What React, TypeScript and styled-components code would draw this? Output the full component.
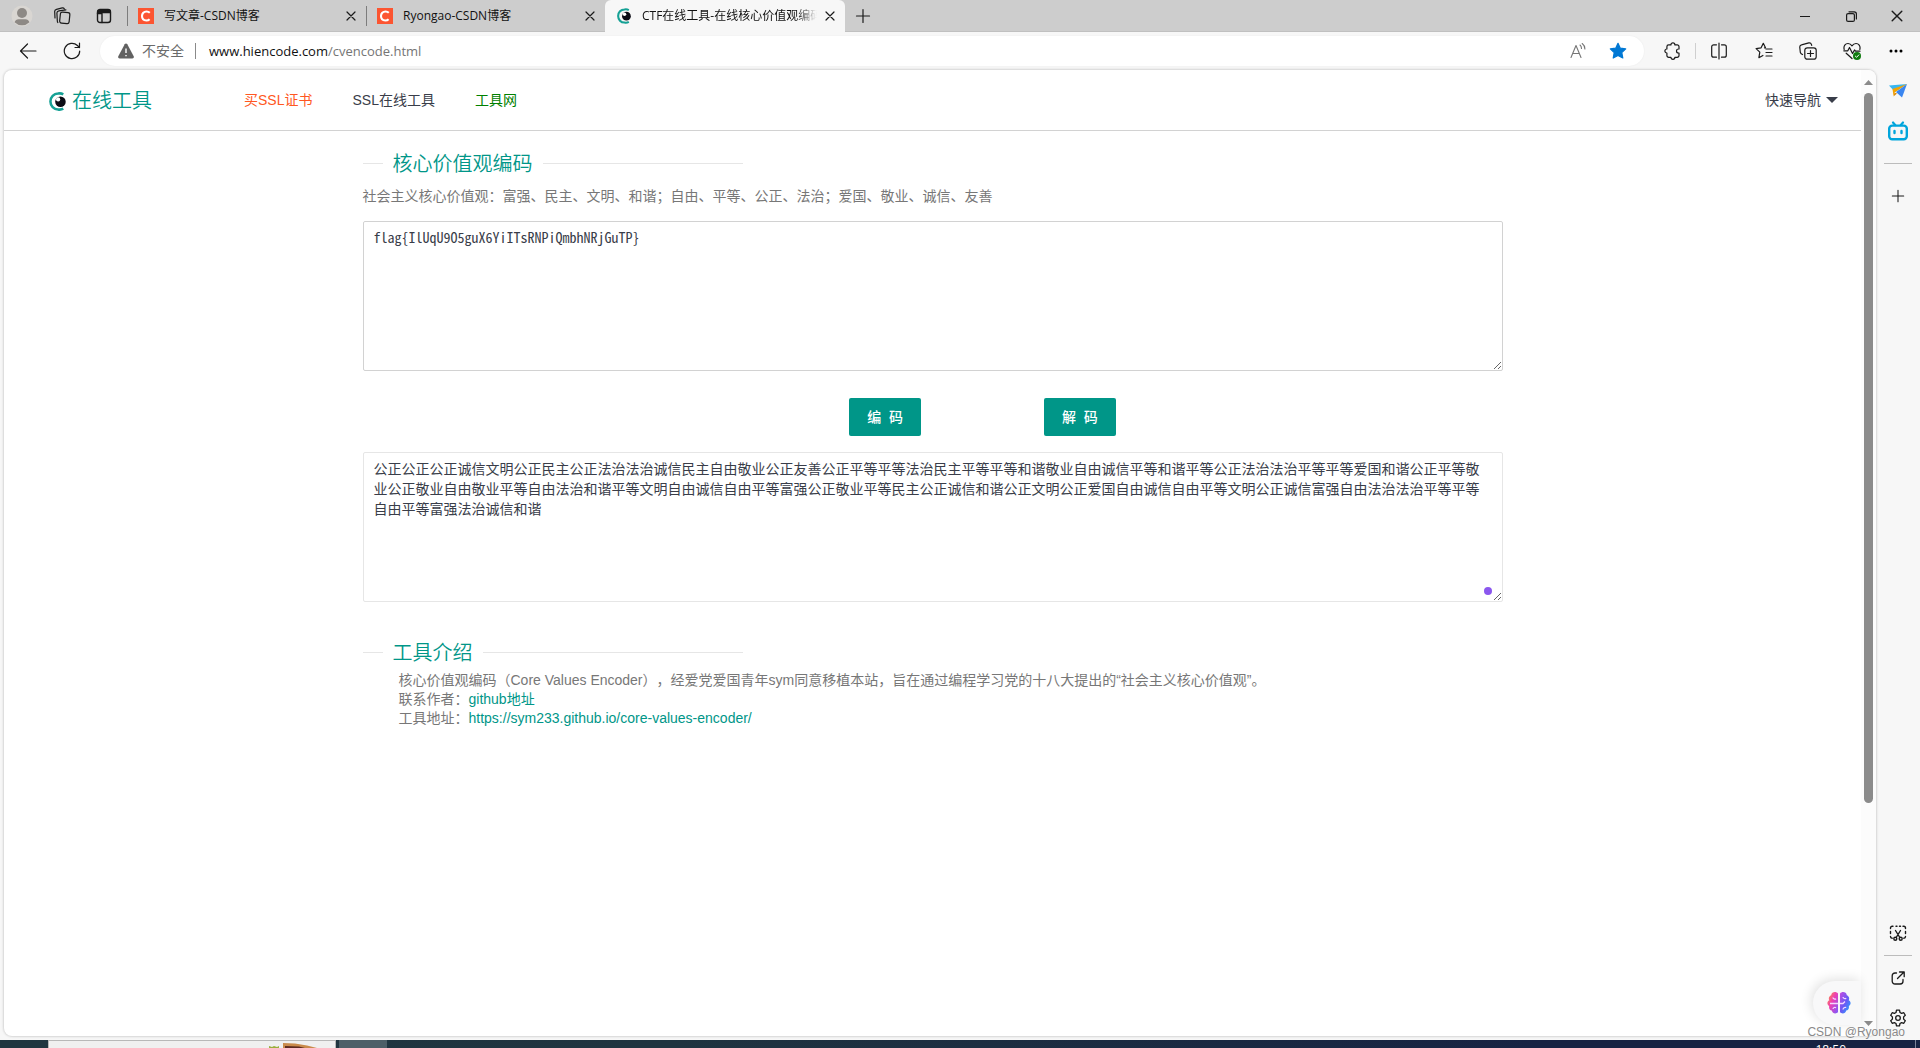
import React, { useState } from 'react';
import styled, { createGlobalStyle } from 'styled-components';

const UI_FONT = '"Open Sans", "Noto Sans CJK SC", sans-serif';
const PAGE_FONT = '"Liberation Sans", "Noto Sans CJK SC", sans-serif';
const MONO_FONT = '"Noto Sans Mono CJK SC", "Liberation Mono", "Noto Sans CJK SC", monospace';

const GlobalStyle = createGlobalStyle`
  *, *::before, *::after { box-sizing: border-box; }
  body { margin: 0; overflow: hidden; background: #f7f7f7; }
  button { border: 0; padding: 0; margin: 0; background: none; font: inherit; color: inherit; cursor: pointer; }
  a { text-decoration: none; }
  svg { display: block; flex: none; }
`;

const Window = styled.div`
  display: flex;
  flex-direction: column;
  height: 100vh;
  font-family: ${UI_FONT};
  font-size: 12px;
  color: #1b1b1b;
`;

/* ---------- tab strip ---------- */

const TabStrip = styled.div`
  display: flex;
  align-items: stretch;
  height: 32px;
  flex: none;
  background: #cdcdcd;
  box-shadow: inset 0 -1px 0 #c0c0c0;
`;

const StripTools = styled.div`
  display: flex;
  width: 127px;
  padding-left: 1px;
  flex: none;
`;

const IconButton = styled.button<{ $width: number }>`
  display: flex;
  align-items: center;
  justify-content: center;
  width: ${(p) => p.$width}px;
  flex: none;
`;

const Tab = styled.div<{ $active?: boolean }>`
  display: flex;
  align-items: center;
  flex: 0 1 ${(p) => (p.$active ? 240 : 239)}px;
  min-width: 0;
  padding: 0 7px 0 ${(p) => (p.$active ? 12 : 0)}px;
  background: ${(p) => (p.$active ? '#f7f7f7' : 'transparent')};
  border-radius: 6px 6px 0 0;

  &::before {
    content: '';
    display: ${(p) => (p.$active ? 'none' : 'block')};
    width: 1px;
    height: 20px;
    margin-right: 10px;
    background: #7d7d7d;
  }
`;

const TabTitle = styled.span<{ $fade?: boolean }>`
  flex: 1;
  margin: 0 5px 0 ${(p) => (p.$fade ? 11 : 10)}px;
  overflow: hidden;
  white-space: nowrap;
  line-height: 20px;
  color: #111;
  mask-image: ${(p) => (p.$fade ? 'linear-gradient(to right, #000 88%, transparent)' : 'none')};
`;

const WindowButtons = styled.div`
  display: flex;
  margin-left: auto;
`;

/* ---------- toolbar ---------- */

const Toolbar = styled.div`
  display: flex;
  align-items: center;
  height: 38px;
  padding: 0 2px 0 6px;
  flex: none;
  background: #f7f7f7;
`;

const AddressBar = styled.div`
  display: flex;
  align-items: center;
  flex: 1;
  height: 30px;
  margin: 0 7px 0 6px;
  padding: 0 6px 0 18px;
  border-radius: 15px;
  background: #fff;
  font-size: 14px;
  color: #6b6b6b;
  box-shadow: 0 0 2px rgba(0, 0, 0, 0.06);
`;

const SecurityLabel = styled.span`
  padding: 0 11px 0 8px;
  line-height: 20px;
`;

const Address = styled.span`
  flex: 1;
  margin-left: 13px;
  font-size: 13px;
  line-height: 20px;
  color: #757575;
`;

const Host = styled.span`
  color: #111;
`;

const Divider = styled.span<{ $dark?: boolean }>`
  width: 1px;
  height: 16px;
  background: ${(p) => (p.$dark ? '#8a8a8a' : '#cfcfcf')};
`;

/* ---------- page frame ---------- */

const Workspace = styled.div`
  display: flex;
  flex: 1;
  min-height: 0;
`;

const Frame = styled.div`
  position: relative;
  display: flex;
  flex: 1;
  min-width: 0;
  margin: 0 0 4px 4px;
  border-radius: 8px;
  overflow: hidden;
  background: #fff;
  box-shadow: 0 0 2px 1px #d6d6d6;
`;

const Page = styled.div`
  flex: 1;
  min-width: 0;
  font-family: ${PAGE_FONT};
  font-size: 14px;
`;

const Header = styled.header`
  display: flex;
  align-items: center;
  height: 61px;
  padding: 0 23px 0 45px;
  border-bottom: 1px solid #d2d2d2;
`;

const Brand = styled.a`
  display: flex;
  align-items: center;
  gap: 6px;
  width: 175px;
  padding-top: 2px;
  font-size: 20px;
  font-weight: 350;
  line-height: 28px;
  color: #009688;
`;

const Nav = styled.nav`
  display: flex;
  flex: 1;
`;

const NavLink = styled.a<{ $color: string }>`
  padding: 0 20px;
  line-height: 60px;
  color: ${(p) => p.$color};
`;

const QuickNav = styled.button`
  display: flex;
  align-items: center;
  gap: 5px;
  line-height: 60px;
  color: #393d49;
`;

const Main = styled.main`
  max-width: 1140px;
  margin: 0 auto;
  padding-top: 17px;
`;

const TitleRule = styled.fieldset`
  width: 33.4%;
  min-width: 0;
  margin: 0;
  padding: 0;
  border: 0;
  border-top: 1px solid #e6e6e6;
`;

const Title = styled.legend`
  margin-left: 20px;
  padding: 2px 10px 0;
  font-size: 20px;
  font-weight: 350;
  line-height: 28px;
  color: #009688;
`;

const Summary = styled.label`
  display: block;
  padding: 8px 0 15px;
  line-height: 20px;
  color: #777;
`;

const TextBoxWrap = styled.div`
  position: relative;
`;

const TextBox = styled.textarea<{ $border: string }>`
  display: block;
  width: 100%;
  height: 150px;
  padding: 5px 10px;
  border: 1px solid ${(p) => p.$border};
  border-radius: 2px;
  outline: none;
  resize: vertical;
  font-family: ${MONO_FONT};
  font-size: 14px;
  line-height: 20px;
  color: #393d49;
  background: #fff;
`;

const AssistDot = styled.span`
  position: absolute;
  right: 11px;
  bottom: 7px;
  width: 8px;
  height: 8px;
  border-radius: 50%;
  background: #8b57ee;
`;

const Actions = styled.div`
  display: flex;
  justify-content: center;
  gap: 123px;
  padding: 27px 0 16px 100px;
`;

const ActionButton = styled.button`
  height: 38px;
  padding: 0 18px 2px;
  border-radius: 2px;
  background: #009688;
  color: #fff;
  font-weight: 500;
  white-space: pre;
`;

const Intro = styled.section`
  margin-top: 35px;
`;

const IntroText = styled.div`
  padding: 4px 0 0 36px;
  line-height: 19px;
  color: #777;
  text-spacing-trim: space-all;
`;

const IntroLine = styled.p`
  margin: 0;
`;

const TextLink = styled.a`
  color: #009688;
`;

const ScrollTrack = styled.div`
  display: flex;
  flex-direction: column;
  align-items: center;
  width: 15px;
  flex: none;
  padding: 10px 0;
  background: #fcfcfc;
`;

const ScrollThumb = styled.div`
  width: 9px;
  height: 75%;
  margin: 8px 0 auto;
  border-radius: 5px;
  background: #8b8b8b;
`;

const BrainButton = styled.button`
  position: absolute;
  right: 15px;
  bottom: 11px;
  display: flex;
  align-items: center;
  width: 48px;
  height: 44px;
  padding-left: 14px;
  border-radius: 22px 0 0 22px;
  background: #f8f8f9;
  box-shadow: -2px -2px 12px rgba(0, 0, 0, 0.12);
`;

/* ---------- side rail ---------- */

const Rail = styled.aside`
  display: flex;
  flex-direction: column;
  align-items: center;
  width: 44px;
  flex: none;
  padding: 1px 0 2px;
`;

const RailButton = styled.button`
  display: flex;
  align-items: center;
  justify-content: center;
  width: 40px;
  height: 40px;
`;

const RailRule = styled.span<{ $gap: number }>`
  width: 28px;
  height: 1px;
  margin: ${(p) => p.$gap}px 0;
  background: #bcbcbc;
`;

const RailSpacer = styled.span`
  flex: 1;
`;

const Watermark = styled.span`
  position: absolute;
  right: 15px;
  bottom: 6px;
  font-family: ${PAGE_FONT};
  font-size: 12px;
  line-height: 20px;
  color: #8a8a8a;
  text-shadow: 0 0 1px #fff;
`;

/* ---------- desktop task bar ---------- */

const TaskBar = styled.footer`
  display: flex;
  height: 8px;
  flex: none;
  overflow: hidden;
  background: linear-gradient(to right, #203640, #1f3440 35%, #172343 80%);
`;

const SearchSlot = styled.div`
  display: flex;
  justify-content: flex-end;
  width: 288px;
  margin: 0 3px 0 48px;
  padding-right: 16px;
  border: 1px solid #b8b8b8;
  border-bottom: 0;
  background: #f0f0f0;
`;

const TaskSlot = styled.div`
  width: 48px;
  background: #4d5f68;
`;

const Clock = styled.time`
  margin: 3px 69px 0 auto;
  font-size: 12px;
  line-height: 14px;
  color: #fff;
`;

const TaskEdge = styled.span`
  width: 1px;
  margin-right: 4px;
  background: #7b8399;
`;

/* ---------- drawings ---------- */

type StrokeProps = { size?: number; box?: number; width?: number; color?: string; children: React.ReactNode };

const Stroke = ({ size = 20, box = 20, width = 1.2, color = '#1b1b1b', children }: StrokeProps) => (
  <svg
    width={size}
    height={size}
    viewBox={`0 0 ${box} ${box}`}
    fill="none"
    stroke={color}
    strokeWidth={width}
    strokeLinecap="round"
    strokeLinejoin="round"
    aria-hidden="true"
  >
    {children}
  </svg>
);

const CloseIcon = ({ size = 10 }: { size?: number }) => (
  <Stroke size={size} box={10}>
    <path d="M1 1l8 8M9 1L1 9" />
  </Stroke>
);

const PlusIcon = ({ size = 16 }: { size?: number }) => (
  <Stroke size={size} box={16}>
    <path d="M8 1.5v13M1.5 8h13" />
  </Stroke>
);

const AvatarIcon = () => (
  <svg width="22" height="22" viewBox="0 0 22 22" aria-hidden="true">
    <circle cx="11" cy="11" r="10.5" fill="#d9d6d2" />
    <circle cx="11" cy="8" r="5" fill="#8d8985" />
    <path d="M3.6 17.2c.6-2 2-3 4-3h6.800c2 0 3.400 1 4 3a10.500 10.500 0 0 1-14.800 0z" fill="#8d8985" />
  </svg>
);

const CsdnIcon = () => (
  <svg width="16" height="16" viewBox="0 0 16 16" aria-hidden="true">
    <rect width="16" height="16" fill="#fc5531" />
    <path d="M11.800 4.800C10.900 3.900 9.800 3.500 8.500 3.500 5.900 3.500 4 5.400 4 8.100c0 2.600 1.700 4.400 4.300 4.400 1.300 0 2.500-.400 3.300-1.200" fill="none" stroke="#fff" strokeWidth="2.100" />
  </svg>
);

const EyeIcon = ({ size }: { size: number }) => (
  <svg width={size} height={size + 2} viewBox="0 0 16 18" aria-hidden="true">
    <path d="M13.500 2.200A7 7 0 0 0 8.500 1.500C4.500 1.500 1.300 4.800 1.300 9s3.200 7.500 7.200 7.500a7 7 0 0 0 5-.7" fill="none" stroke="#16a195" strokeWidth="2.400" />
    <circle cx="10.800" cy="9.200" r="5" fill="#0b0b14" />
    <circle cx="8.600" cy="7" r="2" fill="#fff" />
  </svg>
);

const BrainIcon = () => (
  <svg width="24" height="24" viewBox="0 0 24 24" aria-hidden="true">
    <defs>
      <linearGradient id="brainLeft" x1="0" y1="0" x2="1" y2="1">
        <stop offset="0" stopColor="#ff9a2e" />
        <stop offset=".45" stopColor="#ee3fb4" />
        <stop offset="1" stopColor="#7a5cff" />
      </linearGradient>
      <linearGradient id="brainRight" x1="0" y1="0" x2="1" y2="1">
        <stop offset="0" stopColor="#c44be0" />
        <stop offset=".5" stopColor="#6a5af5" />
        <stop offset="1" stopColor="#18b4ff" />
      </linearGradient>
    </defs>
    <path d="M11 2.500C9-.2 4.500.8 4.200 4.200 1.800 5 1.300 7.800 2.300 9.300-.2 10.500-.2 14 2.200 15c-.6 2.400.6 4.200 2.600 4.600.6 3.200 4.600 3.800 6.200 1.400z" fill="url(#brainLeft)" />
    <path d="M13 2.500C15-.2 19.500.8 19.800 4.200c2.400.8 2.900 3.600 1.900 5.100 2.500 1.200 2.500 4.700.1 5.700.6 2.400-.6 4.200-2.600 4.600-.6 3.200-4.600 3.800-6.200 1.400z" fill="url(#brainRight)" />
    <path d="M3 12.500h8M6 6.500c0 1.500 2 2 3 1.200M6 18c.3-1.600 2-2 3-1.200M13 12.500h3l2-2M16 6c.2 1.600 2 2 3.200 1.200M16 18.500c.2-1.600 1.500-2.500 3.200-2" fill="none" stroke="#f4d8ff" strokeWidth="1.300" />
  </svg>
);

const Triangle = ({ up, width = 9, height = 5, color = '#8b8b8b' }: { up?: boolean; width?: number; height?: number; color?: string }) => (
  <svg width={width} height={height} viewBox="0 0 10 6" preserveAspectRatio="none" aria-hidden="true">
    <path d={up ? 'M0 6L5 0l5 6z' : 'M0 0l5 6 5-6z'} fill={color} />
  </svg>
);

/* ---------- content ---------- */

const FLAG = 'flag{IlUqU9O5guX6YiITsRNPiQmbhNRjGuTP}';

const ENCODED =
  '公正公正公正诚信文明公正民主公正法治法治诚信民主自由敬业公正友善公正平等平等法治民主平等平等和谐敬业自由诚信平等和谐平等公正法治法治平等平等爱国和谐公正平等敬' +
  '业公正敬业自由敬业平等自由法治和谐平等文明自由诚信自由平等富强公正敬业平等民主公正诚信和谐公正文明公正爱国自由诚信自由平等文明公正诚信富强自由法治法治平等平等' +
  '自由平等富强法治诚信和谐';

const NAV = [
  { text: '买SSL证书', color: '#ff5722' },
  { text: 'SSL在线工具', color: '#393d49' },
  { text: '工具网', color: '#008000' },
];

const TABS = [
  { title: '写文章-CSDN博客', icon: <CsdnIcon />, active: false },
  { title: 'Ryongao-CSDN博客', icon: <CsdnIcon />, active: false },
  { title: 'CTF在线工具-在线核心价值观编码', icon: <EyeIcon size={14} />, active: true },
];

export default function App() {
  const [plain, setPlain] = useState(FLAG);
  const [encoded, setEncoded] = useState(ENCODED);

  return (
    <Window>
      <GlobalStyle />
      <TabStrip>
        <StripTools>
          <IconButton $width={41} aria-label="个人资料"><AvatarIcon /></IconButton>
          <IconButton $width={41} aria-label="工作区">
            <Stroke size={18} box={18}>
              <rect x="6" y="5.500" width="9.500" height="11" rx="2" transform="rotate(6 12 11)" />
              <path d="M3.300 13.500L2.900 6c0-1.200.8-2 2-2.200l7-.9M1 11L.7 5c-.2-1.500.6-2.400 1.800-2.700L8.200.9c1-.2 1.700.2 2.100.9M3.800 15.500c-.4-.3-.5-1-.5-2" />
            </Stroke>
          </IconButton>
          <IconButton $width={41} aria-label="标签页操作菜单">
            <Stroke size={16} box={16} width={1.4}>
              <rect x="1.500" y="1.500" width="13" height="13" rx="2.500" />
              <path d="M1.500 5.500h4.500v9" />
              <path d="M2 2.500h12v2H2z" fill="#1b1b1b" />
            </Stroke>
          </IconButton>
        </StripTools>
        {TABS.map((tab) => (
          <Tab key={tab.title} $active={tab.active}>
            {tab.icon}
            <TabTitle $fade={tab.active}>{tab.title}</TabTitle>
            <IconButton $width={16} aria-label="关闭标签页"><CloseIcon /></IconButton>
          </Tab>
        ))}
        <IconButton $width={36} aria-label="新建标签页"><PlusIcon /></IconButton>
        <WindowButtons>
          <IconButton $width={46} aria-label="最小化">
            <Stroke size={10} box={10}><path d="M0 5.500h10" /></Stroke>
          </IconButton>
          <IconButton $width={46} aria-label="还原">
            <Stroke size={11} box={11}>
              <rect x=".6" y="2.600" width="7.800" height="7.800" rx="1.500" />
              <path d="M3 .8h5.200a2.200 2.200 0 0 1 2.200 2.200v5" />
            </Stroke>
          </IconButton>
          <IconButton $width={46} aria-label="关闭"><CloseIcon size={12} /></IconButton>
        </WindowButtons>
      </TabStrip>

      <Toolbar>
        <IconButton $width={44} aria-label="返回">
          <Stroke size={18} box={18}><path d="M17 9H1.500M8.500 2L1.500 9l7 7" /></Stroke>
        </IconButton>
        <IconButton $width={44} aria-label="刷新">
          <Stroke size={18} box={18}><path d="M16.700 9a7.700 7.700 0 1 1-2.300-5.500L16.500 5.500M16.500 1v4.500H12" /></Stroke>
        </IconButton>
        <AddressBar>
          <svg width="16" height="16" viewBox="0 0 16 16" aria-hidden="true">
            <path d="M8 .5c.6 0 1 .3 1.300.8l6.400 12c.5 1-.1 2.200-1.300 2.200H1.600c-1.200 0-1.800-1.200-1.300-2.200l6.400-12C7 .8 7.400.5 8 .5z" fill="#616161" />
            <path d="M8 5.500v4.500M8 12v1.300" stroke="#fff" strokeWidth="1.400" />
          </svg>
          <SecurityLabel>不安全</SecurityLabel>
          <Divider $dark />
          <Address><Host>www.hiencode.com</Host>/cvencode.html</Address>
          <IconButton $width={40} aria-label="大声朗读此页内容">
            <Stroke size={18} box={18} color="#767676" width={1.1}>
              <path d="M2 15.500L7 3.500l5 12M3.800 11.500h6.400M11 3c1 .8 1.500 1.800 1.500 3.500M13.200 1.500c1.700 1.300 2.700 3 2.700 5.500" />
            </Stroke>
          </IconButton>
          <IconButton $width={40} aria-label="收藏此页">
            <svg width="18" height="18" viewBox="0 0 18 18" aria-hidden="true">
              <path d="M9 1.300l2.300 4.900 5.400.7-3.900 3.700 1 5.400L9 13.400 4.200 16l1-5.400L1.300 6.900l5.400-.7z" fill="#0078d4" stroke="#0078d4" strokeWidth="1.200" strokeLinejoin="round" />
            </svg>
          </IconButton>
        </AddressBar>
        <IconButton $width={44} aria-label="扩展">
          <Stroke size={18} box={18}>
            <path d="M4.700 2.900h2.200a2 2 0 0 1 4 0h2.300a1.800 1.800 0 0 1 1.800 1.800v2.300h-.5a2 2 0 0 0 0 4h.5v2.500a1.800 1.800 0 0 1-1.800 1.800h-2.300a2 2 0 0 1-4 0H4.700a1.800 1.800 0 0 1-1.800-1.800V11a2 2 0 0 1 0-4V4.700a1.800 1.800 0 0 1 1.800-1.800z" />
          </Stroke>
        </IconButton>
        <Divider />
        <IconButton $width={46} aria-label="拆分屏幕">
          <Stroke size={18} box={18}>
            <path d="M9 1v16M6.500 2.800H3.700a2 2 0 0 0-2 2v8.400a2 2 0 0 0 2 2h2.800M11.500 2.800h2.800a2 2 0 0 1 2 2v8.400a2 2 0 0 1-2 2h-2.800" />
          </Stroke>
        </IconButton>
        <IconButton $width={44} aria-label="收藏夹">
          <Stroke size={18} box={18}>
            <path d="M10.500 5.800L8.300 1.300 6.100 5.800l-5 .8 3.700 3.500-.9 5.600 4-2.200M11 7h6M11 10.500h6M11 14h6M9.500 5.800h1" />
          </Stroke>
        </IconButton>
        <IconButton $width={44} aria-label="集锦">
          <Stroke size={18} box={18}>
            <rect x="5.800" y="5.800" width="11.400" height="11.400" rx="2.500" />
            <path d="M11.500 8.500v6M8.500 11.500h6M3.500 12.500l-1.300-.8c-.5-.3-.7-.8-.9-1.400L.8 5.500c-.2-1.300.5-2.300 1.700-2.600l7.300-2c1.300-.3 2.200.3 2.600 1.500l.3 1" />
          </Stroke>
        </IconButton>
        <IconButton $width={44} aria-label="浏览器概要">
          <Stroke size={18} box={18}>
            <path d="M1.200 7.500C.2 3.800 2.500 1.500 5 1.500c1.700 0 3 .9 4 2.300 1-1.400 2.300-2.300 4-2.300 2.500 0 4.800 2.300 3.800 6M.8 8.800h4L6.500 5.500 9.500 11.500l2-3.500 1 1.200h4.500M3.200 11.200L9 16.500" />
            <circle cx="14" cy="14" r="4" fill="#107c10" stroke="none" />
            <path d="M12.400 14.200l1.200 1.100 2.200-2.400" stroke="#fff" strokeWidth="1" />
          </Stroke>
        </IconButton>
        <IconButton $width={44} aria-label="设置及其他">
          <svg width="14" height="4" viewBox="0 0 14 4" aria-hidden="true">
            <circle cx="2" cy="2" r="1.500" /><circle cx="7" cy="2" r="1.500" /><circle cx="12" cy="2" r="1.500" />
          </svg>
        </IconButton>
      </Toolbar>

      <Workspace>
        <Frame>
          <Page>
            <Header>
              <Brand href="#home"><EyeIcon size={17} />在线工具</Brand>
              <Nav>
                {NAV.map((item) => (
                  <NavLink key={item.text} href="#nav" $color={item.color}>{item.text}</NavLink>
                ))}
              </Nav>
              <QuickNav>快速导航<Triangle width={12} height={6} color="#393d49" /></QuickNav>
            </Header>
            <Main>
              <TitleRule><Title>核心价值观编码</Title></TitleRule>
              <Summary htmlFor="plain">
                社会主义核心价值观：富强、民主、文明、和谐；自由、平等、公正、法治；爱国、敬业、诚信、友善
              </Summary>
              <TextBox id="plain" $border="#d2d2d2" spellCheck={false} value={plain} onChange={(e) => setPlain(e.target.value)} />
              <Actions>
                <ActionButton type="button">{'编\u00a0\u00a0码'}</ActionButton>
                <ActionButton type="button">{'解\u00a0\u00a0码'}</ActionButton>
              </Actions>
              <TextBoxWrap>
                <TextBox aria-label="编码结果" $border="#e6e6e6" spellCheck={false} value={encoded} onChange={(e) => setEncoded(e.target.value)} />
                <AssistDot />
              </TextBoxWrap>
              <Intro>
                <TitleRule><Title>工具介绍</Title></TitleRule>
                <IntroText>
                  <IntroLine>核心价值观编码（Core Values Encoder），经爱党爱国青年sym同意移植本站，旨在通过编程学习党的十八大提出的“社会主义核心价值观”。</IntroLine>
                  <IntroLine>联系作者：<TextLink href="#github">github地址</TextLink></IntroLine>
                  <IntroLine>工具地址：<TextLink href="#tool">https://sym233.github.io/core-values-encoder/</TextLink></IntroLine>
                </IntroText>
              </Intro>
            </Main>
          </Page>
          <ScrollTrack>
            <Triangle up />
            <ScrollThumb />
            <Triangle />
          </ScrollTrack>
          <BrainButton aria-label="助手"><BrainIcon /></BrainButton>
        </Frame>

        <Rail>
          <RailButton aria-label="投递">
            <svg width="18" height="14" viewBox="0 0 18 14" aria-hidden="true">
              <path d="M0 1.500L18 0 6 8z" fill="#38b6f1" />
              <path d="M3.500 5L18 0 5.500 8.500 4.500 12z" fill="#f5a300" />
              <path d="M18 0L7 8l6 5.500z" fill="#3a86f0" />
              <path d="M5.500 8.500L4.500 12.500 8 9.500z" fill="#e08a00" />
            </svg>
          </RailButton>
          <RailButton aria-label="哔哩哔哩">
            <svg width="20" height="20" viewBox="0 0 20 20" fill="none" stroke="#00a5dc" strokeLinecap="round" aria-hidden="true">
              <rect x="1.200" y="4.600" width="17.600" height="13.600" rx="3" strokeWidth="2.400" />
              <path d="M5 1.500l2.200 2.500M15 1.500L12.800 4" strokeWidth="2.200" />
              <path d="M6.500 10v2M13.500 10v2" strokeWidth="2.400" />
            </svg>
          </RailButton>
          <RailRule $gap={12} />
          <RailButton aria-label="自定义边栏"><PlusIcon size={14} /></RailButton>
          <RailSpacer />
          <RailButton aria-label="屏幕截图">
            <Stroke size={18} box={18} width={1.4}>
              <path d="M1.500 4.500V4A1.800 1.800 0 0 1 3.300 2.200H4M7 2.200h1M10.500 2.200h1M14 2.200h.7A1.800 1.800 0 0 1 16.500 4v.5M1.500 7.500v2M16.500 7.500v2M1.500 12.500c0 1 .6 1.700 1.700 1.700M16.500 12.500c0 1-.6 1.700-1.700 1.700" />
              <path d="M6.500 6.500l4.300 7M11.500 6.500l-4.300 7" />
              <circle cx="6.300" cy="14.800" r="1.500" /><circle cx="11.700" cy="14.800" r="1.500" />
            </Stroke>
          </RailButton>
          <RailRule $gap={2} />
          <RailButton aria-label="在新窗口打开">
            <Stroke size={14} box={14} width={1.3}>
              <path d="M5.500 2H4a2.800 2.800 0 0 0-2.800 2.800v5.400A2.800 2.800 0 0 0 4 13h5.200a2.800 2.800 0 0 0 2.800-2.800V8.500M8.500 1h4.700v4.700M13 1L6.500 7.500" />
            </Stroke>
          </RailButton>
          <RailButton aria-label="设置">
            <Stroke size={18} box={18} width={1.3}>
              <circle cx="9" cy="9" r="2.300" />
              <path d="M7.500 1.200h3l.5 2.300 1.600.9 2.200-.7 1.500 2.600-1.700 1.600v2.200l1.700 1.600-1.500 2.600-2.200-.7-1.600.9-.5 2.300h-3L7 14.500l-1.600-.9-2.200.7-1.500-2.600 1.700-1.600V7.900L1.700 6.300l1.500-2.600 2.200.7L7 3.500z" />
            </Stroke>
          </RailButton>
        </Rail>
      </Workspace>

      <TaskBar>
        <SearchSlot>
          <svg width="50" height="7" viewBox="0 0 50 7" aria-hidden="true">
            <path d="M0 7V5l3 1 2-1 3 1 2-1v2z" fill="#9aae3c" />
            <path d="M14 7V2l12 .5 12 2 10 2.500z" fill="#c98a4b" />
            <path d="M16 7V5l14 .5 6 1.500z" fill="#5c2a20" />
          </svg>
        </SearchSlot>
        <TaskSlot />
        <Clock>18:50</Clock>
        <TaskEdge />
      </TaskBar>
      <Watermark>CSDN @Ryongao</Watermark>
    </Window>
  );
}
